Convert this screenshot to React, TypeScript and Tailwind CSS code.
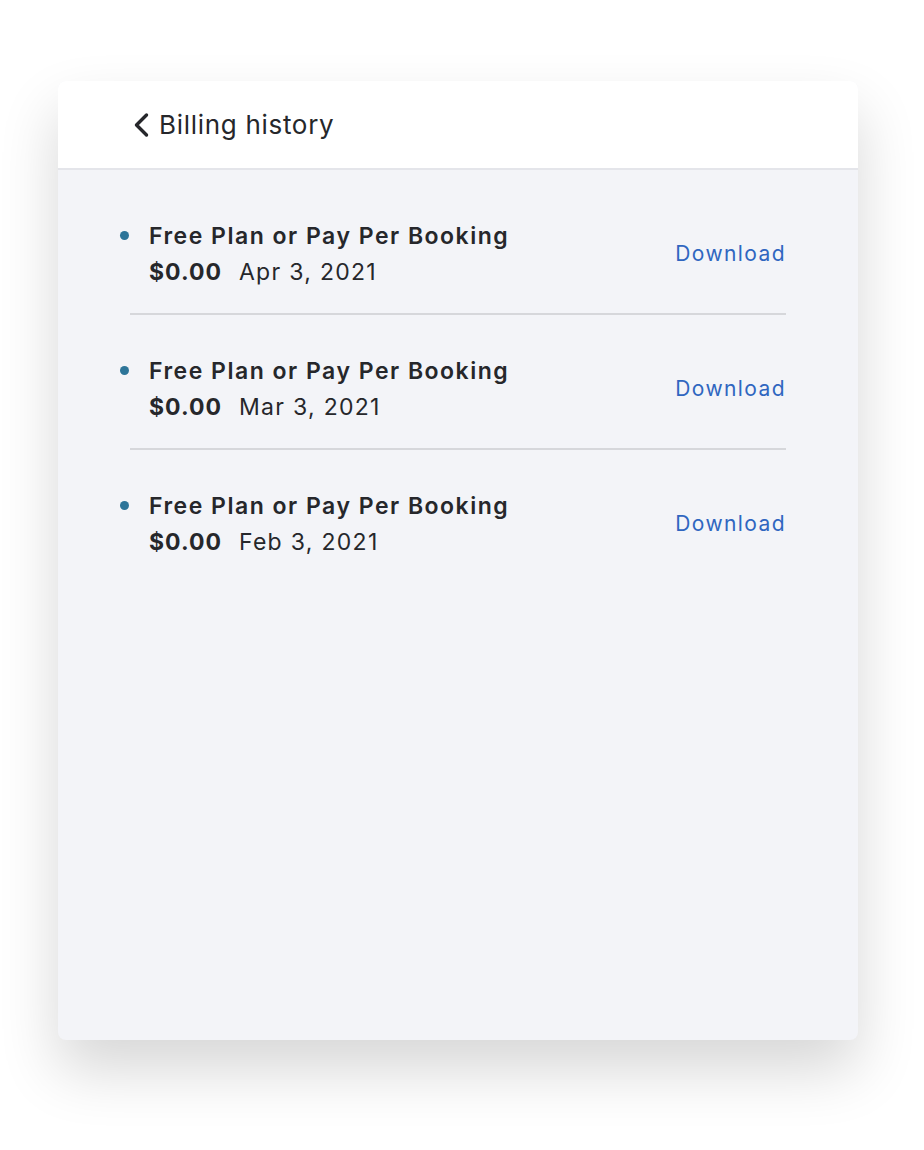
const invoices = [
  { plan: "Free Plan or Pay Per Booking", amount: "$0.00", date: "Apr 3, 2021" },
  { plan: "Free Plan or Pay Per Booking", amount: "$0.00", date: "Mar 3, 2021" },
  { plan: "Free Plan or Pay Per Booking", amount: "$0.00", date: "Feb 3, 2021" },
];

function BackIcon() {
  return (
    <svg width="18" height="26" viewBox="0 0 18 26" fill="none" aria-hidden>
      <path
        d="M14.5 3 L4.5 13 L14.5 23"
        stroke="currentColor"
        strokeWidth="3.4"
        strokeLinecap="round"
        strokeLinejoin="round"
      />
    </svg>
  );
}

export default function App() {
  return (
    <div
      className="min-h-[1150px] bg-white px-[58px] pt-[81px]"
      style={{ fontFamily: "Inter, 'Noto Sans', sans-serif" }}
    >
      <div className="flex h-[959px] w-[800px] flex-col overflow-hidden rounded-lg bg-[#f3f4f8] shadow-[0_30px_60px_rgba(0,0,0,0.16)]">
        <header className="flex h-[89px] shrink-0 items-center border-b-2 border-[#e4e5ea] bg-white pl-[74px]">
          <button type="button" className="flex items-center gap-[9px] text-[#26272b]">
            <BackIcon />
            <span className="text-[26px] leading-none tracking-[0.7px]">Billing history</span>
          </button>
        </header>

        <ul className="px-[72px] pt-[10px]">
          {invoices.map((inv, i) => (
            <li
              key={inv.date}
              className={
                i < invoices.length - 1
                  ? "flex items-center justify-between border-b-2 border-[#d6d7db] pt-[38px] pb-[23px]"
                  : "flex items-center justify-between pt-[38px] pb-[23px]"
              }
            >
              <div className="relative pl-[19px] text-[#26272b]">
                <span className="absolute left-[-10px] top-[13px] h-[9px] w-[9px] rounded-full bg-[#2d7599]" />
                <div className="text-[23px] font-semibold leading-[36px] tracking-[1.5px]">{inv.plan}</div>
                <div className="flex gap-[17px] text-[23px] leading-[36px] tracking-[1.3px]">
                  <span className="font-bold tracking-[1px]">{inv.amount}</span>
                  <span>{inv.date}</span>
                </div>
              </div>
              <a href="#" className="text-[21px] tracking-[1.4px] text-[#2f66c0]">
                Download
              </a>
            </li>
          ))}
        </ul>
      </div>
    </div>
  );
}
